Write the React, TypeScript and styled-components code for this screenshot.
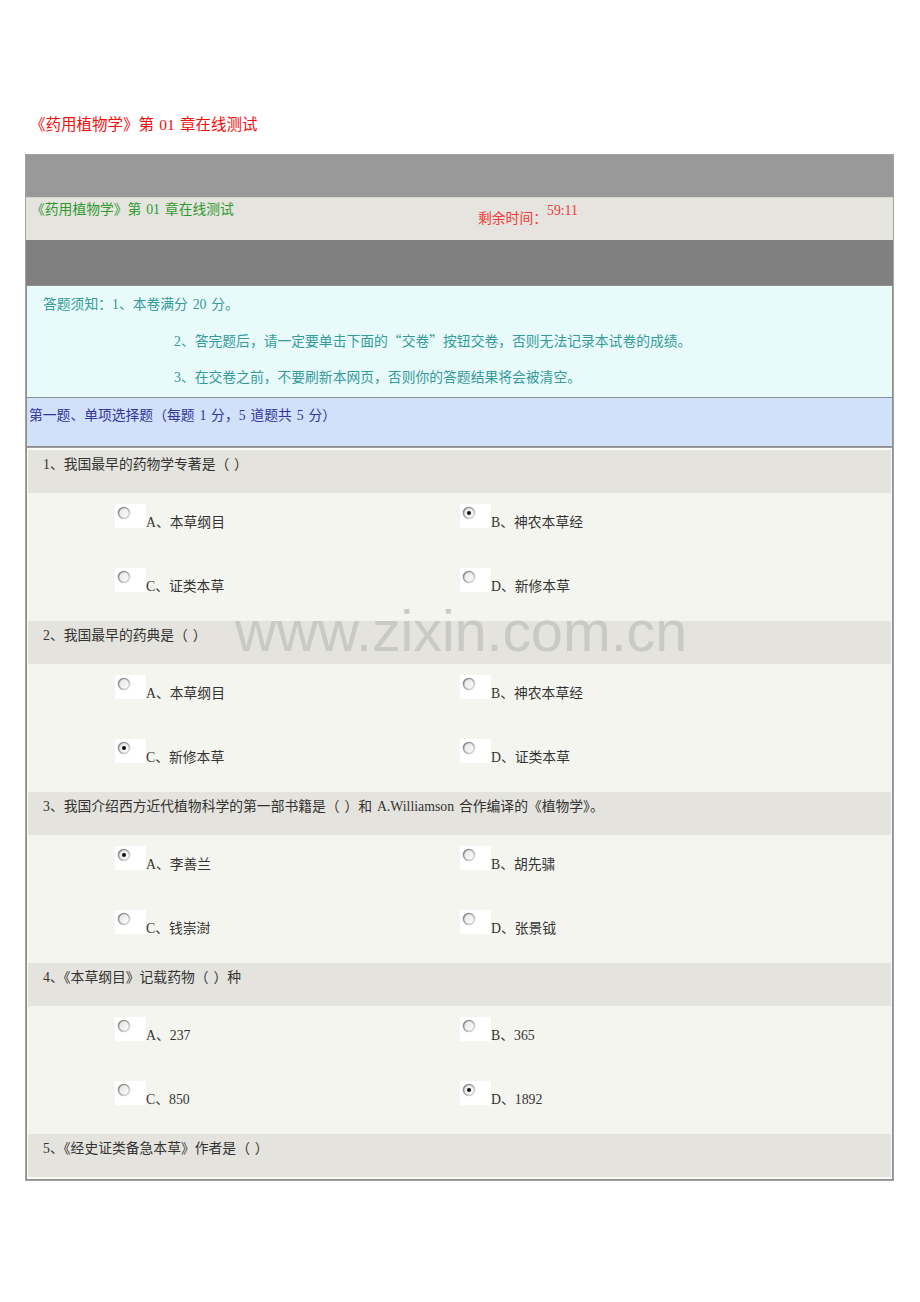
import styled, { createGlobalStyle } from 'styled-components';

const GlobalStyle = createGlobalStyle`
  html, body {
    margin: 0;
    padding: 0;
    background: #ffffff;
  }
  body {
    font-family: "Liberation Serif", "Noto Sans CJK SC", serif;
    font-size: 13.8px;
    word-spacing: 0.1em;
    color: #333333;
  }
`;

const Page = styled.div`
  position: relative;
  width: 920px;
  min-height: 1302px;
  padding-top: 115px;
  box-sizing: border-box;
`;

const PageTitle = styled.h1`
  margin: 0 0 19px 30px;
  font-size: 15.5px;
  line-height: 20px;
  font-weight: normal;
  color: #f20d0d;
`;

const Frame = styled.div`
  margin-left: 25px;
  width: 869px;
  box-sizing: border-box;
  border: 1px solid #a3a3a3;
`;

const Bar = styled.div<{ $tone: string; $h: number }>`
  height: ${(p) => p.$h}px;
  background: ${(p) => p.$tone};
`;

const TitleRow = styled.div`
  display: flex;
  height: 43px;
  background: #e5e4de;
  box-sizing: border-box;
  border-top: 1px solid #d6d5cf;
`;

const TitleCell = styled.div`
  width: 447px;
  padding: 4px 0 0 5px;
  line-height: 16px;
  color: #2f9a2f;
`;

const TimerCell = styled.div`
  display: flex;
  align-items: flex-start;
  color: #f03a3a;
  line-height: 16px;
`;

const TimerLabel = styled.span`
  margin-top: 13px;
`;

const TimerValue = styled.span`
  margin-top: 5px;
`;

const Notice = styled.div`
  height: 113px;
  box-sizing: border-box;
  border: 1px solid #8f8f8f;
  background: #e8fbfa;
  color: #349a9a;
  padding-top: 11px;
`;

const NoticeLine = styled.div<{ $indent: number }>`
  padding-left: ${(p) => p.$indent}px;
  line-height: 16px;
  height: 36.5px;
`;

const Quote = styled.span`
  font-family: "Noto Sans CJK SC", sans-serif;
  line-height: 0;
`;

const SectionHead = styled.div`
  height: 49px;
  box-sizing: border-box;
  border: 1px solid #8f8f8f;
  border-top: none;
  background: #d0e1f9;
  color: #34349a;
  padding: 10px 0 0 2px;
  line-height: 16px;
`;

const Questions = styled.div`
  border: 1px solid #8c8c8c;
  border-top: 1px solid #9a9a9a;
  padding: 2px 1px;
  background: #fafaf7;
`;

const QuestionHead = styled.div`
  height: 43px;
  box-sizing: border-box;
  background: #e4e3dd;
  padding: 7px 0 0 15px;
  line-height: 16px;
`;

const OptionGrid = styled.div`
  display: grid;
  grid-template-columns: 345px 1fr;
  grid-auto-rows: 64px;
  padding-left: 87px;
  background: #f5f5f0;
`;

const OptionItem = styled.label`
  display: flex;
  align-items: flex-end;
  align-self: start;
  margin-top: 11px;
`;

const RadioBox = styled.span`
  display: block;
  width: 31px;
  height: 24px;
  background: #ffffff;
  flex-shrink: 0;
  svg {
    display: block;
    margin: 2px 0 0 2px;
  }
`;

const OptionText = styled.span`
  line-height: 14px;
  margin-bottom: -2px;
`;

const Watermark = styled.div`
  position: absolute;
  left: 235px;
  top: 603px;
  font-family: "Liberation Sans", Arial, sans-serif;
  font-size: 57.3px;
  line-height: 1;
  word-spacing: normal;
  color: #c9c9c5;
  pointer-events: none;
  white-space: nowrap;
`;

const Radio = ({ checked }: { checked: boolean }) => (
  <svg width="14" height="14" viewBox="0 0 14 14">
    <defs>
      <linearGradient id="ring" x1="0" y1="0" x2="1" y2="1">
        <stop offset="0" stopColor="#7a7a7a" />
        <stop offset="0.6" stopColor="#b8b8b8" />
        <stop offset="1" stopColor="#e6e6e6" />
      </linearGradient>
      <linearGradient id="fill" x1="0" y1="0" x2="1" y2="1">
        <stop offset="0" stopColor="#e2e2e2" />
        <stop offset="1" stopColor="#ffffff" />
      </linearGradient>
    </defs>
    <circle cx="7" cy="7" r="5.5" fill="url(#fill)" stroke="url(#ring)" strokeWidth="1.6" />
    {checked && <circle cx="7" cy="7" r="2" fill="#111" />}
  </svg>
);

type Question = {
  title: string;
  options?: { text: string; checked?: boolean }[];
};

const questions: Question[] = [
  {
    title: '1、我国最早的药物学专著是（ ）',
    options: [
      { text: 'A、本草纲目' },
      { text: 'B、神农本草经', checked: true },
      { text: 'C、证类本草' },
      { text: 'D、新修本草' },
    ],
  },
  {
    title: '2、我国最早的药典是（ ）',
    options: [
      { text: 'A、本草纲目' },
      { text: 'B、神农本草经' },
      { text: 'C、新修本草', checked: true },
      { text: 'D、证类本草' },
    ],
  },
  {
    title: '3、我国介绍西方近代植物科学的第一部书籍是（ ）和 A.Williamson 合作编译的《植物学》。',
    options: [
      { text: 'A、李善兰', checked: true },
      { text: 'B、胡先骕' },
      { text: 'C、钱崇澍' },
      { text: 'D、张景钺' },
    ],
  },
  {
    title: '4、《本草纲目》记载药物（ ）种',
    options: [
      { text: 'A、237' },
      { text: 'B、365' },
      { text: 'C、850' },
      { text: 'D、1892', checked: true },
    ],
  },
  { title: '5、《经史证类备急本草》作者是（ ）' },
];

const App = () => {
  return (
    <Page>
      <GlobalStyle />
      <PageTitle>《药用植物学》第 01 章在线测试</PageTitle>
      <Frame>
        <Bar $tone="#999999" $h={42} />
        <TitleRow>
          <TitleCell>《药用植物学》第 01 章在线测试</TitleCell>
          <TimerCell>
            <TimerLabel>剩余时间：</TimerLabel>
            <TimerValue>59:11</TimerValue>
          </TimerCell>
        </TitleRow>
        <Bar $tone="#808080" $h={45} />
        <Notice>
          <NoticeLine $indent={16}>答题须知：1、本卷满分 20 分。</NoticeLine>
          <NoticeLine $indent={147}>
            2、答完题后，请一定要单击下面的<Quote>“</Quote>交卷<Quote>”</Quote>按钮交卷，否则无法记录本试卷的成绩。
          </NoticeLine>
          <NoticeLine $indent={147}>3、在交卷之前，不要刷新本网页，否则你的答题结果将会被清空。</NoticeLine>
        </Notice>
        <SectionHead>第一题、单项选择题（每题 1 分，5 道题共 5 分）</SectionHead>
        <Questions>
          {questions.map((q) => (
            <div key={q.title}>
              <QuestionHead>{q.title}</QuestionHead>
              {q.options && (
                <OptionGrid>
                  {q.options.map((o) => (
                    <OptionItem key={o.text}>
                      <RadioBox>
                        <Radio checked={!!o.checked} />
                      </RadioBox>
                      <OptionText>{o.text}</OptionText>
                    </OptionItem>
                  ))}
                </OptionGrid>
              )}
            </div>
          ))}
        </Questions>
      </Frame>
      <Watermark>www.zixin.com.cn</Watermark>
    </Page>
  );
};

export default App;
